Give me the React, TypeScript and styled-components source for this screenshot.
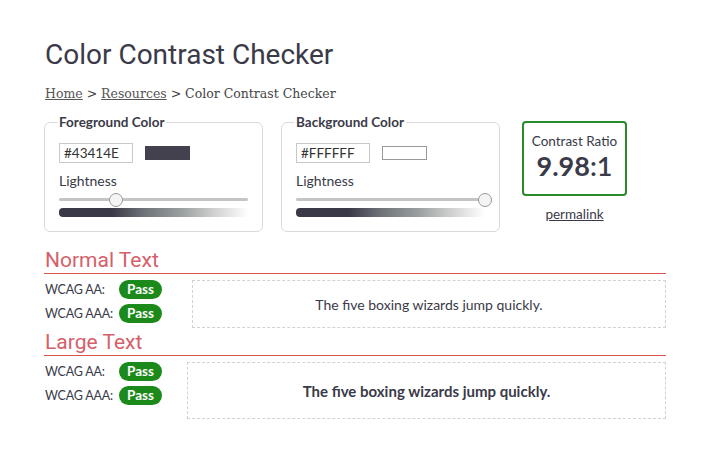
import { FC } from "react";
import styled, { createGlobalStyle } from "styled-components";

const GlobalStyle = createGlobalStyle`
  html, body { margin: 0; padding: 0; background: #fff; }
  body { font-family: "Lato", "Open Sans", sans-serif; color: #3b3a48; }
`;

// styled components
const Page = styled.div`
  width: 718px;
  height: 453px;
  padding: 39px 52px 0 44px;
  box-sizing: border-box;
  overflow: hidden;
`;

const Title = styled.h1`
  margin: 0 0 0 1px;
  font-family: "Roboto", sans-serif;
  font-weight: 400;
  font-size: 28px;
  line-height: 32px;
  color: #3a3a48;
`;

const Crumbs = styled.div`
  margin: 15px 0 0 1px;
  font-family: "DejaVu Serif", "Liberation Serif", serif;
  font-size: 12.5px;
  color: #444;
  a {
    color: #555;
    text-decoration: underline;
  }
`;

const Controls = styled.div`
  display: flex;
  align-items: flex-start;
  margin-top: 13px;
`;

const Fieldset = styled.fieldset<{ $ml?: number }>`
  width: 219px;
  height: 118px;
  box-sizing: border-box;
  margin: 0 0 0 ${(p) => p.$ml ?? 0}px;
  padding: 2px 14px 0 14px;
  border: 1px solid #dadada;
  border-radius: 6px;
  legend {
    padding: 0 2px;
    margin-left: -2px;
    font-weight: 700;
    font-size: 13.5px;
    color: #3a3a48;
  }
`;

const HexRow = styled.div`
  display: flex;
  align-items: center;
  gap: 12px;
  margin-top: 11px;
`;

const HexInput = styled.div`
  width: 74px;
  height: 20px;
  box-sizing: border-box;
  border: 1px solid #c8c8c8;
  padding: 1px 4px;
  font-size: 13.5px;
  line-height: 17px;
  color: #333;
`;

const Swatch = styled.div<{ $color: string }>`
  width: 45px;
  height: 14px;
  box-sizing: border-box;
  background: ${(p) => p.$color};
  border: 1px solid ${(p) => (p.$color === "#FFFFFF" ? "#999" : p.$color)};
`;

const Label = styled.div`
  margin-top: 9px;
  font-size: 14px;
  color: #3a3a48;
`;

const Track = styled.div`
  position: relative;
  height: 3px;
  margin-top: 9px;
  background: #c4c4c4;
  border-radius: 2px;
`;

const Thumb = styled.div`
  position: absolute;
  top: -5px;
  width: 12px;
  height: 12px;
  margin-left: -7px;
  border-radius: 50%;
  background: #f4f4f4;
  border: 1px solid #999;
`;

const Gradient = styled.div`
  height: 9px;
  margin-top: 7px;
  border-radius: 4px 0 0 4px;
  background: linear-gradient(
    to right,
    #393947 0%,
    #393947 28%,
    #6e7378 45%,
    #9aa0a0 65%,
    #d0d0d0 82%,
    #ffffff 100%
  );
`;

const RatioCol = styled.div`
  display: flex;
  flex-direction: column;
  align-items: center;
  margin-left: 22px;
  margin-top: 7px;
`;

const RatioBox = styled.div`
  width: 105px;
  height: 75px;
  box-sizing: border-box;
  border: 2px solid #2a8a2a;
  border-radius: 4px;
  text-align: center;
  padding-top: 10px;
  color: #3a3a48;
`;

const RatioLabel = styled.div`
  font-size: 13.5px;
`;

const RatioValue = styled.div`
  font-size: 27px;
  font-weight: 700;
  line-height: 34px;
  span {
    font-weight: 600;
  }
`;

const Permalink = styled.a`
  margin-top: 10px;
  font-size: 13.5px;
  color: #3a3a48;
  text-decoration: underline;
`;

const SectionTitle = styled.h2<{ $mt: number }>`
  margin: ${(p) => p.$mt}px 0 0 0;
  padding: 0 0 1px 1px;
  border-bottom: 1px solid #d9534f;
  font-family: "Roboto", sans-serif;
  font-weight: 400;
  font-size: 21px;
  line-height: 24px;
  color: #d5606a;
`;

const ResultRow = styled.div<{ $gap: number; $mt: number }>`
  display: flex;
  align-items: flex-start;
  gap: ${(p) => p.$gap}px;
  margin-top: ${(p) => p.$mt}px;
`;

const Levels = styled.div`
  display: flex;
  flex-direction: column;
  gap: 5px;
  padding-left: 1px;
`;

const Level = styled.div`
  display: grid;
  grid-template-columns: 74px auto;
  align-items: center;
  font-size: 12.5px;
  letter-spacing: -0.2px;
  color: #3a3a48;
`;

const Badge = styled.span`
  display: inline-block;
  width: 43px;
  height: 19px;
  line-height: 19px;
  text-align: center;
  border-radius: 10px;
  background: #1b8a1b;
  color: #fff;
  font-weight: 700;
  font-size: 13.5px;
  letter-spacing: 0;
`;

const Sample = styled.div<{ $w: number; $h: number; $large?: boolean }>`
  width: ${(p) => p.$w}px;
  height: ${(p) => p.$h}px;
  box-sizing: border-box;
  border: 1px dashed #d2d2d2;
  display: flex;
  align-items: center;
  justify-content: center;
  font-size: ${(p) => (p.$large ? 15 : 14)}px;
  font-weight: ${(p) => (p.$large ? 700 : 400)};
  color: #3a3a48;
`;

// =============================================================
type ColorPanelProps = {
  title: string;
  hex: string;
  lightness: number;
  ml?: number;
};
// =============================================================

const ColorPanel: FC<ColorPanelProps> = ({ title, hex, lightness, ml }) => (
  <Fieldset $ml={ml}>
    <legend>{title}</legend>
    <HexRow>
      <HexInput>{hex}</HexInput>
      <Swatch $color={hex} />
    </HexRow>
    <Label>Lightness</Label>
    <Track>
      <Thumb style={{ left: `${lightness}%` }} />
    </Track>
    <Gradient />
  </Fieldset>
);

const LevelList: FC = () => (
  <Levels>
    <Level>
      WCAG AA: <Badge>Pass</Badge>
    </Level>
    <Level>
      WCAG AAA: <Badge>Pass</Badge>
    </Level>
  </Levels>
);

const App: FC = () => (
  <Page>
    <GlobalStyle />
    <Title>Color Contrast Checker</Title>
    <Crumbs>
      <a href="#">Home</a> &gt; <a href="#">Resources</a> &gt; Color Contrast
      Checker
    </Crumbs>

    <Controls>
      <ColorPanel title="Foreground Color" hex="#43414E" lightness={30} />
      <ColorPanel
        title="Background Color"
        hex="#FFFFFF"
        lightness={100}
        ml={18}
      />
      <RatioCol>
        <RatioBox>
          <RatioLabel>Contrast Ratio</RatioLabel>
          <RatioValue>
            9.98<span>:1</span>
          </RatioValue>
        </RatioBox>
        <Permalink href="#">permalink</Permalink>
      </RatioCol>
    </Controls>

    <SectionTitle $mt={16}>Normal Text</SectionTitle>
    <ResultRow $gap={30} $mt={6}>
      <LevelList />
      <Sample $w={474} $h={48}>
        The five boxing wizards jump quickly.
      </Sample>
    </ResultRow>

    <SectionTitle $mt={2}>Large Text</SectionTitle>
    <ResultRow $gap={25} $mt={6}>
      <LevelList />
      <Sample $w={479} $h={57} $large>
        The five boxing wizards jump quickly.
      </Sample>
    </ResultRow>
  </Page>
);

export default App;
